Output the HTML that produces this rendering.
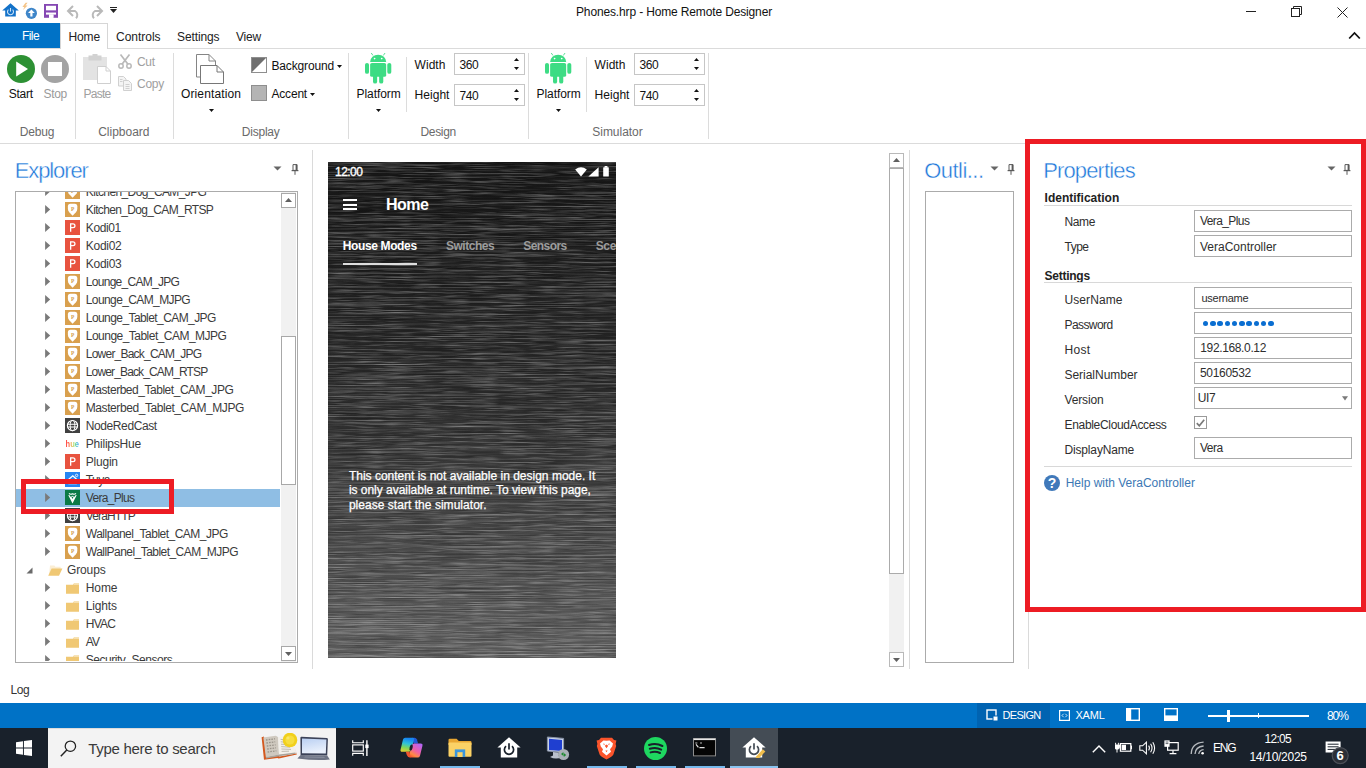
<!DOCTYPE html>
<html><head><meta charset="utf-8"><title>Home Remote Designer</title>
<style>
html,body{margin:0;padding:0;}
body{width:1366px;height:768px;overflow:hidden;background:#fff;position:relative;font-family:"Liberation Sans", sans-serif;}
.t{position:absolute;white-space:pre;}
.r{position:absolute;box-sizing:border-box;}
</style></head><body>
<svg class="r" style="left:1.5px;top:2.5px;" width="17" height="14" viewBox="0 0 17 14"><path d="M8.5 0.2 L16.8 7.4 H13.8 V13.6 H3.2 V7.4 H0.2 Z" fill="#1372c9"/><path d="M6.4 6.6 A3 3 0 1 0 10.6 6.6" fill="none" stroke="#cfe4f7" stroke-width="1.1"/><path d="M8.5 5 V8.6" stroke="#cfe4f7" stroke-width="1.1"/></svg>
<svg class="r" style="left:22px;top:2px;" width="17" height="17" viewBox="0 0 17 17"><path d="M3.6 0.8 L0.4 5 H2.4 L1 8 L5.6 3.6 H3.4 L5.6 0.8 Z" fill="#f5c487"/><circle cx="9.4" cy="11.3" r="5.6" fill="#3f86c9"/><path d="M9.4 7.6 L12.8 11 H10.5 V14.6 H8.3 V11 H6 Z" fill="#fff"/></svg>
<svg class="r" style="left:44px;top:4px;" width="14" height="14" viewBox="0 0 14 14"><rect x="0" y="0" width="14" height="13.8" fill="#8548b3"/><rect x="2" y="1.8" width="10" height="4.8" fill="#fff"/><rect x="2" y="8.6" width="10" height="5.2" fill="#fff"/><rect x="2" y="8.6" width="3" height="3" fill="#fff"/><path d="M2 8.6 H12 V13.8 H9.4 V10.6 H5 V13.8 H2 Z" fill="#8548b3"/><rect x="2" y="6.6" width="10" height="2" fill="#8548b3"/><rect x="5" y="10.6" width="4.4" height="3.2" fill="#fff"/><rect x="2" y="8.6" width="10" height="2" fill="#fff"/></svg>
<svg class="r" style="left:65.5px;top:4.5px;" width="16" height="14" viewBox="0 0 16 14"><path d="M7 1 L2 6 L7 11" fill="none" stroke="#b9b9b9" stroke-width="2"/><path d="M2.4 6 H9 A4.6 4.6 0 0 1 10 13.2" fill="none" stroke="#b9b9b9" stroke-width="2"/></svg>
<svg class="r" style="left:87.5px;top:4.5px;" width="16" height="14" viewBox="0 0 16 14"><path d="M9 1 L14 6 L9 11" fill="none" stroke="#b9b9b9" stroke-width="2"/><path d="M13.6 6 H7 A4.6 4.6 0 0 0 6 13.2" fill="none" stroke="#b9b9b9" stroke-width="2"/></svg>
<div class="r" style="left:109.5px;top:7px;width:7px;height:1px;background:#222;"></div>
<svg class="r" style="left:109.5px;top:9px;" width="7" height="5" viewBox="0 0 7 5"><path d="M0 0 H7 L3.5 4 Z" fill="#222"/></svg>
<div class="t" style="left:576.00px;top:4.04px;font-size:12px;line-height:16px;color:#111;letter-spacing:-0.144px;">Phones.hrp - Home Remote Designer</div>
<div class="r" style="left:1246px;top:11px;width:10px;height:1px;background:#222;"></div>
<svg class="r" style="left:1291px;top:6px;" width="12" height="12" viewBox="0 0 12 12"><path d="M2.5 2.5 V0.5 H10.5 V8.5 H8.5" fill="none" stroke="#222" stroke-width="1"/><rect x="0.5" y="2.5" width="8" height="8" fill="none" stroke="#222" stroke-width="1"/></svg>
<svg class="r" style="left:1337px;top:7px;" width="11" height="11" viewBox="0 0 11 11"><path d="M0.5 0.5 L10.5 10.5 M10.5 0.5 L0.5 10.5" stroke="#222" stroke-width="1" fill="none"/></svg>
<svg class="r" style="left:1348px;top:31px;" width="13" height="9" viewBox="0 0 13 9"><path d="M1.2 7.5 L6.5 2 L11.8 7.5" fill="none" stroke="#111" stroke-width="1.8"/></svg>
<div class="r" style="left:0px;top:23px;width:60px;height:25px;background:#0072c6;"></div>
<div class="t" style="left:22.00px;top:28.14px;font-size:12px;line-height:16px;color:#fff;letter-spacing:-0.586px;">File</div>
<div class="r" style="left:0px;top:48px;width:1366px;height:1px;background:#dbdbdb;"></div>
<div class="r" style="left:60px;top:23px;width:48px;height:26px;background:#fff;border:1px solid #d6d6d6;border-bottom:none;"></div>
<div class="t" style="left:68.50px;top:28.74px;font-size:12px;line-height:16px;color:#222;letter-spacing:-0.129px;">Home</div>
<div class="t" style="left:116.00px;top:28.74px;font-size:12px;line-height:16px;color:#222;letter-spacing:-0.023px;">Controls</div>
<div class="t" style="left:177.00px;top:28.74px;font-size:12px;line-height:16px;color:#222;letter-spacing:-0.107px;">Settings</div>
<div class="t" style="left:236.00px;top:28.74px;font-size:12px;line-height:16px;color:#222;letter-spacing:-0.199px;">View</div>
<div class="r" style="left:0px;top:143px;width:1366px;height:1px;background:#dbdbdb;"></div>
<div class="r" style="left:75px;top:53px;width:1px;height:86px;background:#dcdcdc;"></div>
<div class="r" style="left:173px;top:53px;width:1px;height:86px;background:#dcdcdc;"></div>
<div class="r" style="left:348px;top:53px;width:1px;height:86px;background:#dcdcdc;"></div>
<div class="r" style="left:528px;top:53px;width:1px;height:86px;background:#dcdcdc;"></div>
<div class="r" style="left:708px;top:53px;width:1px;height:86px;background:#dcdcdc;"></div>
<div class="r" style="left:406px;top:57px;width:1px;height:55px;background:#dcdcdc;"></div>
<div class="r" style="left:586px;top:57px;width:1px;height:55px;background:#dcdcdc;"></div>
<div class="t" style="left:19.80px;top:124.14px;font-size:12px;line-height:16px;color:#6a6a6a;letter-spacing:-0.175px;">Debug</div>
<div class="t" style="left:98.20px;top:124.14px;font-size:12px;line-height:16px;color:#6a6a6a;letter-spacing:-0.008px;">Clipboard</div>
<div class="t" style="left:241.80px;top:124.14px;font-size:12px;line-height:16px;color:#6a6a6a;letter-spacing:-0.223px;">Display</div>
<div class="t" style="left:420.40px;top:124.14px;font-size:12px;line-height:16px;color:#6a6a6a;letter-spacing:-0.293px;">Design</div>
<div class="t" style="left:592.30px;top:124.14px;font-size:12px;line-height:16px;color:#6a6a6a;letter-spacing:-0.032px;">Simulator</div>
<svg class="r" style="left:7px;top:55px;" width="28" height="28" viewBox="0 0 28 28"><circle cx="14" cy="14" r="14" fill="#2d9134"/><path d="M9.2 6.5 L21 14 L9.2 21.5 Z" fill="#fff"/></svg>
<svg class="r" style="left:41px;top:55px;" width="28" height="28" viewBox="0 0 28 28"><circle cx="14" cy="14" r="14" fill="#a3a3a3"/><rect x="7" y="7" width="14" height="14" fill="#fff"/></svg>
<div class="t" style="left:8.70px;top:85.64px;font-size:12px;line-height:16px;color:#111;letter-spacing:-0.209px;">Start</div>
<div class="t" style="left:43.50px;top:85.64px;font-size:12px;line-height:16px;color:#9a9a9a;letter-spacing:-0.297px;">Stop</div>
<svg class="r" style="left:83px;top:54px;" width="28" height="30" viewBox="0 0 28 30"><rect x="0" y="3" width="24" height="23" fill="#e3e3e3"/><rect x="5.5" y="1.5" width="13" height="5" fill="#d2d2d2"/><rect x="9.5" y="0" width="5" height="3" fill="#d2d2d2"/><path d="M14.5 12.5 H23 L27.5 17 V29.5 H14.5 Z" fill="#fff" stroke="#cfcfcf" stroke-width="1"/><path d="M23 12.5 V17 H27.5" fill="none" stroke="#cfcfcf" stroke-width="1"/></svg>
<div class="t" style="left:83.50px;top:85.64px;font-size:12px;line-height:16px;color:#a0a0a0;letter-spacing:-0.738px;">Paste</div>
<svg class="r" style="left:118px;top:54px;" width="14" height="15" viewBox="0 0 14 15"><path d="M2.5 0.5 L10.2 10.5 M11.5 0.5 L3.8 10.5" stroke="#b9b9b9" stroke-width="1.7" fill="none"/><circle cx="3" cy="12" r="2.2" fill="none" stroke="#b9b9b9" stroke-width="1.5"/><circle cx="11" cy="12" r="2.2" fill="none" stroke="#b9b9b9" stroke-width="1.5"/></svg>
<div class="t" style="left:137.00px;top:54.34px;font-size:12px;line-height:16px;color:#a0a0a0;letter-spacing:-0.296px;">Cut</div>
<svg class="r" style="left:118px;top:76px;" width="14" height="15" viewBox="0 0 14 15"><path d="M0.5 0.5 H5.5 L8 3 V10 H0.5 Z" fill="#f4f4f4" stroke="#d0d0d0"/><path d="M5.5 4.5 H10.5 L13.5 7.5 V14.5 H5.5 Z" fill="#f4f4f4" stroke="#d0d0d0"/><path d="M7.5 8.5 H11.5 M7.5 10.5 H11.5 M7.5 12.5 H11.5 M2 3.5 H4.5 M2 5.5 H4.5" stroke="#d0d0d0" fill="none"/></svg>
<div class="t" style="left:137.00px;top:76.44px;font-size:12px;line-height:16px;color:#a0a0a0;letter-spacing:-0.254px;">Copy</div>
<svg class="r" style="left:196px;top:54px;" width="29" height="31" viewBox="0 0 29 31"><path d="M4.5 23 H0.5 V0.5 H13 L19.5 7 V11" fill="none" stroke="#858585" stroke-width="1"/><path d="M13 0.5 V7 H19.5" fill="none" stroke="#858585" stroke-width="1"/><path d="M4.5 11.5 H21 L27.5 18 V29.5 H4.5 Z" fill="#fff" stroke="#777" stroke-width="1"/><path d="M21 11.5 V18 H27.5" fill="none" stroke="#777" stroke-width="1"/></svg>
<div class="t" style="left:181.00px;top:85.64px;font-size:12px;line-height:16px;color:#111;letter-spacing:0.118px;">Orientation</div>
<svg class="r" style="left:209px;top:109px;" width="5" height="3" viewBox="0 0 5 3"><path d="M0 0 H5 L2.5 3 Z" fill="#111"/></svg>
<svg class="r" style="left:251px;top:57px;" width="16" height="16" viewBox="0 0 16 16"><rect x="0.5" y="0.5" width="15" height="15" fill="#fff" stroke="#8e8e8e"/><path d="M1 1 H15 L1 15 Z" fill="#6f6f6f"/></svg>
<div class="t" style="left:271.50px;top:58.24px;font-size:12px;line-height:16px;color:#111;letter-spacing:-0.155px;">Background</div>
<svg class="r" style="left:337px;top:65px;" width="5" height="3" viewBox="0 0 5 3"><path d="M0 0 H5 L2.5 3 Z" fill="#111"/></svg>
<div class="r" style="left:251px;top:85px;width:16px;height:16px;background:#b4b4b4;border:1px solid #8e8e8e;"></div>
<div class="t" style="left:271.50px;top:86.44px;font-size:12px;line-height:16px;color:#111;letter-spacing:-0.198px;">Accent</div>
<svg class="r" style="left:310px;top:93px;" width="5" height="3" viewBox="0 0 5 3"><path d="M0 0 H5 L2.5 3 Z" fill="#111"/></svg>
<svg class="r" style="left:364.8px;top:53.3px;overflow:visible;" width="26.3" height="30.5" viewBox="1.4 0.4 23.6 29.6" preserveAspectRatio="none"><g fill="#3ddc84"><path d="M6 9.2 A7.2 7.2 0 0 1 20.4 9.2 Z"/><rect x="6" y="10.2" width="14.4" height="13.3" rx="1.6"/><rect x="1.4" y="10" width="3.6" height="10.6" rx="1.8"/><rect x="21.4" y="10" width="3.6" height="10.6" rx="1.8"/><rect x="8.6" y="20" width="3.7" height="10" rx="1.8"/><rect x="14.1" y="20" width="3.7" height="10" rx="1.8"/></g><path d="M8.6 2.8 L7 0.4 M17.8 2.8 L19.4 0.4" stroke="#3ddc84" stroke-width=".8"/><circle cx="10" cy="5.8" r=".8" fill="#fff"/><circle cx="16.4" cy="5.8" r=".8" fill="#fff"/></svg>
<div class="t" style="left:356.60px;top:85.64px;font-size:12px;line-height:16px;color:#111;letter-spacing:-0.086px;">Platform</div>
<svg class="r" style="left:376px;top:109px;" width="5" height="3" viewBox="0 0 5 3"><path d="M0 0 H5 L2.5 3 Z" fill="#111"/></svg>
<div class="t" style="left:414.60px;top:56.84px;font-size:12px;line-height:16px;color:#111;letter-spacing:0.023px;">Width</div>
<div class="t" style="left:414.60px;top:87.44px;font-size:12px;line-height:16px;color:#111;letter-spacing:0.035px;">Height</div>
<div class="r" style="left:454px;top:53px;width:71px;height:22px;background:#fff;border:1px solid #c6c6c6;"></div>
<div class="t" style="left:459.40px;top:56.84px;font-size:12px;line-height:16px;color:#111;letter-spacing:-0.344px;">360</div>
<svg class="r" style="left:514px;top:58px;" width="5" height="3" viewBox="0 0 5 3"><path d="M0 3 H5 L2.5 0 Z" fill="#111"/></svg>
<svg class="r" style="left:514px;top:67px;" width="5" height="3" viewBox="0 0 5 3"><path d="M0 0 H5 L2.5 3 Z" fill="#111"/></svg>
<div class="r" style="left:454px;top:84px;width:71px;height:22px;background:#fff;border:1px solid #c6c6c6;"></div>
<div class="t" style="left:459.40px;top:87.84px;font-size:12px;line-height:16px;color:#111;letter-spacing:-0.344px;">740</div>
<svg class="r" style="left:514px;top:89px;" width="5" height="3" viewBox="0 0 5 3"><path d="M0 3 H5 L2.5 0 Z" fill="#111"/></svg>
<svg class="r" style="left:514px;top:98px;" width="5" height="3" viewBox="0 0 5 3"><path d="M0 0 H5 L2.5 3 Z" fill="#111"/></svg>
<svg class="r" style="left:544.8px;top:53.3px;overflow:visible;" width="26.3" height="30.5" viewBox="1.4 0.4 23.6 29.6" preserveAspectRatio="none"><g fill="#3ddc84"><path d="M6 9.2 A7.2 7.2 0 0 1 20.4 9.2 Z"/><rect x="6" y="10.2" width="14.4" height="13.3" rx="1.6"/><rect x="1.4" y="10" width="3.6" height="10.6" rx="1.8"/><rect x="21.4" y="10" width="3.6" height="10.6" rx="1.8"/><rect x="8.6" y="20" width="3.7" height="10" rx="1.8"/><rect x="14.1" y="20" width="3.7" height="10" rx="1.8"/></g><path d="M8.6 2.8 L7 0.4 M17.8 2.8 L19.4 0.4" stroke="#3ddc84" stroke-width=".8"/><circle cx="10" cy="5.8" r=".8" fill="#fff"/><circle cx="16.4" cy="5.8" r=".8" fill="#fff"/></svg>
<div class="t" style="left:536.60px;top:85.64px;font-size:12px;line-height:16px;color:#111;letter-spacing:-0.086px;">Platform</div>
<svg class="r" style="left:556px;top:109px;" width="5" height="3" viewBox="0 0 5 3"><path d="M0 0 H5 L2.5 3 Z" fill="#111"/></svg>
<div class="t" style="left:594.60px;top:56.84px;font-size:12px;line-height:16px;color:#111;letter-spacing:0.023px;">Width</div>
<div class="t" style="left:594.60px;top:87.44px;font-size:12px;line-height:16px;color:#111;letter-spacing:0.035px;">Height</div>
<div class="r" style="left:634px;top:53px;width:71px;height:22px;background:#fff;border:1px solid #c6c6c6;"></div>
<div class="t" style="left:639.40px;top:56.84px;font-size:12px;line-height:16px;color:#111;letter-spacing:-0.344px;">360</div>
<svg class="r" style="left:694px;top:58px;" width="5" height="3" viewBox="0 0 5 3"><path d="M0 3 H5 L2.5 0 Z" fill="#111"/></svg>
<svg class="r" style="left:694px;top:67px;" width="5" height="3" viewBox="0 0 5 3"><path d="M0 0 H5 L2.5 3 Z" fill="#111"/></svg>
<div class="r" style="left:634px;top:84px;width:71px;height:22px;background:#fff;border:1px solid #c6c6c6;"></div>
<div class="t" style="left:639.40px;top:87.84px;font-size:12px;line-height:16px;color:#111;letter-spacing:-0.344px;">740</div>
<svg class="r" style="left:694px;top:89px;" width="5" height="3" viewBox="0 0 5 3"><path d="M0 3 H5 L2.5 0 Z" fill="#111"/></svg>
<svg class="r" style="left:694px;top:98px;" width="5" height="3" viewBox="0 0 5 3"><path d="M0 0 H5 L2.5 3 Z" fill="#111"/></svg>
<div class="t" style="left:14.70px;top:158.08px;font-size:22px;line-height:26px;color:#1d78da;letter-spacing:-1.103px;-webkit-text-stroke:0.4px #fff;">Explorer</div>
<svg class="r" style="left:273.4px;top:166px;" width="9" height="5" viewBox="0 0 9 5"><path d="M0.5 0.5 H8.5 L4.5 4.5 Z" fill="#666"/></svg>
<svg class="r" style="left:290.8px;top:164px;" width="8" height="11" viewBox="0 0 8 11"><path d="M2 0.6 H6 V6.4 H2 Z" fill="none" stroke="#5a5a5a" stroke-width="1"/><rect x="4.6" y="0.6" width="1.6" height="6" fill="#5a5a5a"/><rect x="0.6" y="6" width="6.8" height="1.2" fill="#5a5a5a"/><rect x="3.5" y="7" width="1" height="3.8" fill="#5a5a5a"/></svg>
<div class="r" style="left:15px;top:191px;width:283px;height:472px;background:#fff;border:1px solid #ababab;"></div>
<div class="r" style="left:16px;top:192px;width:265px;height:469px;overflow:hidden;">
<svg class="r" style="left:29px;top:-5.0px;" width="6" height="9" viewBox="0 0 6 9"><path d="M0.1 0.1 L5.2 4.5 L0.1 8.9 Z" fill="#7a7a7a"/></svg>
<svg class="r" style="left:49px;top:-7.75px;" width="15" height="15" viewBox="0 0 15 15"><rect width="15" height="15" fill="#d9a04e"/><path d="M5.4 1.7 H9.8 Q12.3 1.7 12.3 4.2 V6.8 Q12.3 8.8 10.9 10.3 L7.6 13.8 L4.3 10.3 Q2.9 8.8 2.9 6.8 V4.2 Q2.9 1.7 5.4 1.7 Z" fill="#fff"/><text x="6.1" y="8.6" font-family="Liberation Serif" font-weight="700" font-size="5.4" fill="#d39a48">P</text></svg>
<div class="t" style="left:69.80px;top:-8.26px;font-size:12px;line-height:16px;color:#3b3b3b;letter-spacing:-0.609px;">Kitchen_Dog_CAM_JPG</div>
<svg class="r" style="left:29px;top:13.0px;" width="6" height="9" viewBox="0 0 6 9"><path d="M0.1 0.1 L5.2 4.5 L0.1 8.9 Z" fill="#7a7a7a"/></svg>
<svg class="r" style="left:49px;top:10.25px;" width="15" height="15" viewBox="0 0 15 15"><rect width="15" height="15" fill="#d9a04e"/><path d="M5.4 1.7 H9.8 Q12.3 1.7 12.3 4.2 V6.8 Q12.3 8.8 10.9 10.3 L7.6 13.8 L4.3 10.3 Q2.9 8.8 2.9 6.8 V4.2 Q2.9 1.7 5.4 1.7 Z" fill="#fff"/><text x="6.1" y="8.6" font-family="Liberation Serif" font-weight="700" font-size="5.4" fill="#d39a48">P</text></svg>
<div class="t" style="left:69.80px;top:9.74px;font-size:12px;line-height:16px;color:#3b3b3b;letter-spacing:-0.656px;">Kitchen_Dog_CAM_RTSP</div>
<svg class="r" style="left:29px;top:31.0px;" width="6" height="9" viewBox="0 0 6 9"><path d="M0.1 0.1 L5.2 4.5 L0.1 8.9 Z" fill="#7a7a7a"/></svg>
<svg class="r" style="left:49px;top:28.25px;" width="15" height="15" viewBox="0 0 15 15"><rect width="15" height="15" fill="#e8533f"/><path d="M5 3.2 H8 Q10.6 3.2 10.6 5.7 Q10.6 8.2 8 8.2 H6.3 V11.8 H5 Z M6.3 4.4 V7 H7.9 Q9.3 7 9.3 5.7 Q9.3 4.4 7.9 4.4 Z" fill="#fff" fill-rule="evenodd"/></svg>
<div class="t" style="left:69.80px;top:27.74px;font-size:12px;line-height:16px;color:#3b3b3b;letter-spacing:-0.396px;">Kodi01</div>
<svg class="r" style="left:29px;top:49.0px;" width="6" height="9" viewBox="0 0 6 9"><path d="M0.1 0.1 L5.2 4.5 L0.1 8.9 Z" fill="#7a7a7a"/></svg>
<svg class="r" style="left:49px;top:46.25px;" width="15" height="15" viewBox="0 0 15 15"><rect width="15" height="15" fill="#e8533f"/><path d="M5 3.2 H8 Q10.6 3.2 10.6 5.7 Q10.6 8.2 8 8.2 H6.3 V11.8 H5 Z M6.3 4.4 V7 H7.9 Q9.3 7 9.3 5.7 Q9.3 4.4 7.9 4.4 Z" fill="#fff" fill-rule="evenodd"/></svg>
<div class="t" style="left:69.80px;top:45.74px;font-size:12px;line-height:16px;color:#3b3b3b;letter-spacing:-0.296px;">Kodi02</div>
<svg class="r" style="left:29px;top:67.0px;" width="6" height="9" viewBox="0 0 6 9"><path d="M0.1 0.1 L5.2 4.5 L0.1 8.9 Z" fill="#7a7a7a"/></svg>
<svg class="r" style="left:49px;top:64.25px;" width="15" height="15" viewBox="0 0 15 15"><rect width="15" height="15" fill="#e8533f"/><path d="M5 3.2 H8 Q10.6 3.2 10.6 5.7 Q10.6 8.2 8 8.2 H6.3 V11.8 H5 Z M6.3 4.4 V7 H7.9 Q9.3 7 9.3 5.7 Q9.3 4.4 7.9 4.4 Z" fill="#fff" fill-rule="evenodd"/></svg>
<div class="t" style="left:69.80px;top:63.74px;font-size:12px;line-height:16px;color:#3b3b3b;letter-spacing:-0.296px;">Kodi03</div>
<svg class="r" style="left:29px;top:85.0px;" width="6" height="9" viewBox="0 0 6 9"><path d="M0.1 0.1 L5.2 4.5 L0.1 8.9 Z" fill="#7a7a7a"/></svg>
<svg class="r" style="left:49px;top:82.25px;" width="15" height="15" viewBox="0 0 15 15"><rect width="15" height="15" fill="#d9a04e"/><path d="M5.4 1.7 H9.8 Q12.3 1.7 12.3 4.2 V6.8 Q12.3 8.8 10.9 10.3 L7.6 13.8 L4.3 10.3 Q2.9 8.8 2.9 6.8 V4.2 Q2.9 1.7 5.4 1.7 Z" fill="#fff"/><text x="6.1" y="8.6" font-family="Liberation Serif" font-weight="700" font-size="5.4" fill="#d39a48">P</text></svg>
<div class="t" style="left:69.80px;top:81.74px;font-size:12px;line-height:16px;color:#3b3b3b;letter-spacing:-0.715px;">Lounge_CAM_JPG</div>
<svg class="r" style="left:29px;top:103.0px;" width="6" height="9" viewBox="0 0 6 9"><path d="M0.1 0.1 L5.2 4.5 L0.1 8.9 Z" fill="#7a7a7a"/></svg>
<svg class="r" style="left:49px;top:100.25px;" width="15" height="15" viewBox="0 0 15 15"><rect width="15" height="15" fill="#d9a04e"/><path d="M5.4 1.7 H9.8 Q12.3 1.7 12.3 4.2 V6.8 Q12.3 8.8 10.9 10.3 L7.6 13.8 L4.3 10.3 Q2.9 8.8 2.9 6.8 V4.2 Q2.9 1.7 5.4 1.7 Z" fill="#fff"/><text x="6.1" y="8.6" font-family="Liberation Serif" font-weight="700" font-size="5.4" fill="#d39a48">P</text></svg>
<div class="t" style="left:69.80px;top:99.74px;font-size:12px;line-height:16px;color:#3b3b3b;letter-spacing:-0.606px;">Lounge_CAM_MJPG</div>
<svg class="r" style="left:29px;top:121.0px;" width="6" height="9" viewBox="0 0 6 9"><path d="M0.1 0.1 L5.2 4.5 L0.1 8.9 Z" fill="#7a7a7a"/></svg>
<svg class="r" style="left:49px;top:118.25px;" width="15" height="15" viewBox="0 0 15 15"><rect width="15" height="15" fill="#d9a04e"/><path d="M5.4 1.7 H9.8 Q12.3 1.7 12.3 4.2 V6.8 Q12.3 8.8 10.9 10.3 L7.6 13.8 L4.3 10.3 Q2.9 8.8 2.9 6.8 V4.2 Q2.9 1.7 5.4 1.7 Z" fill="#fff"/><text x="6.1" y="8.6" font-family="Liberation Serif" font-weight="700" font-size="5.4" fill="#d39a48">P</text></svg>
<div class="t" style="left:69.80px;top:117.74px;font-size:12px;line-height:16px;color:#3b3b3b;letter-spacing:-0.576px;">Lounge_Tablet_CAM_JPG</div>
<svg class="r" style="left:29px;top:139.0px;" width="6" height="9" viewBox="0 0 6 9"><path d="M0.1 0.1 L5.2 4.5 L0.1 8.9 Z" fill="#7a7a7a"/></svg>
<svg class="r" style="left:49px;top:136.25px;" width="15" height="15" viewBox="0 0 15 15"><rect width="15" height="15" fill="#d9a04e"/><path d="M5.4 1.7 H9.8 Q12.3 1.7 12.3 4.2 V6.8 Q12.3 8.8 10.9 10.3 L7.6 13.8 L4.3 10.3 Q2.9 8.8 2.9 6.8 V4.2 Q2.9 1.7 5.4 1.7 Z" fill="#fff"/><text x="6.1" y="8.6" font-family="Liberation Serif" font-weight="700" font-size="5.4" fill="#d39a48">P</text></svg>
<div class="t" style="left:69.80px;top:135.74px;font-size:12px;line-height:16px;color:#3b3b3b;letter-spacing:-0.527px;">Lounge_Tablet_CAM_MJPG</div>
<svg class="r" style="left:29px;top:157.0px;" width="6" height="9" viewBox="0 0 6 9"><path d="M0.1 0.1 L5.2 4.5 L0.1 8.9 Z" fill="#7a7a7a"/></svg>
<svg class="r" style="left:49px;top:154.25px;" width="15" height="15" viewBox="0 0 15 15"><rect width="15" height="15" fill="#d9a04e"/><path d="M5.4 1.7 H9.8 Q12.3 1.7 12.3 4.2 V6.8 Q12.3 8.8 10.9 10.3 L7.6 13.8 L4.3 10.3 Q2.9 8.8 2.9 6.8 V4.2 Q2.9 1.7 5.4 1.7 Z" fill="#fff"/><text x="6.1" y="8.6" font-family="Liberation Serif" font-weight="700" font-size="5.4" fill="#d39a48">P</text></svg>
<div class="t" style="left:69.80px;top:153.74px;font-size:12px;line-height:16px;color:#3b3b3b;letter-spacing:-0.777px;">Lower_Back_CAM_JPG</div>
<svg class="r" style="left:29px;top:175.0px;" width="6" height="9" viewBox="0 0 6 9"><path d="M0.1 0.1 L5.2 4.5 L0.1 8.9 Z" fill="#7a7a7a"/></svg>
<svg class="r" style="left:49px;top:172.25px;" width="15" height="15" viewBox="0 0 15 15"><rect width="15" height="15" fill="#d9a04e"/><path d="M5.4 1.7 H9.8 Q12.3 1.7 12.3 4.2 V6.8 Q12.3 8.8 10.9 10.3 L7.6 13.8 L4.3 10.3 Q2.9 8.8 2.9 6.8 V4.2 Q2.9 1.7 5.4 1.7 Z" fill="#fff"/><text x="6.1" y="8.6" font-family="Liberation Serif" font-weight="700" font-size="5.4" fill="#d39a48">P</text></svg>
<div class="t" style="left:69.80px;top:171.74px;font-size:12px;line-height:16px;color:#3b3b3b;letter-spacing:-0.860px;">Lower_Back_CAM_RTSP</div>
<svg class="r" style="left:29px;top:193.0px;" width="6" height="9" viewBox="0 0 6 9"><path d="M0.1 0.1 L5.2 4.5 L0.1 8.9 Z" fill="#7a7a7a"/></svg>
<svg class="r" style="left:49px;top:190.25px;" width="15" height="15" viewBox="0 0 15 15"><rect width="15" height="15" fill="#d9a04e"/><path d="M5.4 1.7 H9.8 Q12.3 1.7 12.3 4.2 V6.8 Q12.3 8.8 10.9 10.3 L7.6 13.8 L4.3 10.3 Q2.9 8.8 2.9 6.8 V4.2 Q2.9 1.7 5.4 1.7 Z" fill="#fff"/><text x="6.1" y="8.6" font-family="Liberation Serif" font-weight="700" font-size="5.4" fill="#d39a48">P</text></svg>
<div class="t" style="left:69.80px;top:189.74px;font-size:12px;line-height:16px;color:#3b3b3b;letter-spacing:-0.469px;">Masterbed_Tablet_CAM_JPG</div>
<svg class="r" style="left:29px;top:211.0px;" width="6" height="9" viewBox="0 0 6 9"><path d="M0.1 0.1 L5.2 4.5 L0.1 8.9 Z" fill="#7a7a7a"/></svg>
<svg class="r" style="left:49px;top:208.25px;" width="15" height="15" viewBox="0 0 15 15"><rect width="15" height="15" fill="#d9a04e"/><path d="M5.4 1.7 H9.8 Q12.3 1.7 12.3 4.2 V6.8 Q12.3 8.8 10.9 10.3 L7.6 13.8 L4.3 10.3 Q2.9 8.8 2.9 6.8 V4.2 Q2.9 1.7 5.4 1.7 Z" fill="#fff"/><text x="6.1" y="8.6" font-family="Liberation Serif" font-weight="700" font-size="5.4" fill="#d39a48">P</text></svg>
<div class="t" style="left:69.80px;top:207.74px;font-size:12px;line-height:16px;color:#3b3b3b;letter-spacing:-0.426px;">Masterbed_Tablet_CAM_MJPG</div>
<svg class="r" style="left:29px;top:229.0px;" width="6" height="9" viewBox="0 0 6 9"><path d="M0.1 0.1 L5.2 4.5 L0.1 8.9 Z" fill="#7a7a7a"/></svg>
<svg class="r" style="left:49px;top:226.25px;" width="15" height="15" viewBox="0 0 15 15"><rect width="15" height="15" fill="#404040"/><g fill="none" stroke="#fff"><circle cx="7.5" cy="7.6" r="5.1" stroke-width="1.15"/><ellipse cx="7.5" cy="7.6" rx="2.3" ry="5.1" stroke-width="1"/><path d="M2.4 6.2 H12.6 M2.4 9 H12.6" stroke-width="1.1"/></g></svg>
<div class="t" style="left:69.80px;top:225.74px;font-size:12px;line-height:16px;color:#3b3b3b;letter-spacing:-0.407px;">NodeRedCast</div>
<svg class="r" style="left:29px;top:247.0px;" width="6" height="9" viewBox="0 0 6 9"><path d="M0.1 0.1 L5.2 4.5 L0.1 8.9 Z" fill="#7a7a7a"/></svg>
<svg class="r" style="left:49px;top:244.25px;" width="15" height="15" viewBox="0 0 15 15"><defs><linearGradient id="hg" gradientUnits="userSpaceOnUse" x1="0.5" x2="14" y1="0" y2="0"><stop offset="0" stop-color="#ff2020"/><stop offset=".22" stop-color="#ff3a24"/><stop offset=".4" stop-color="#f59a36"/><stop offset=".58" stop-color="#b4d24e"/><stop offset=".74" stop-color="#4ccf7e"/><stop offset=".9" stop-color="#2aa6ee"/><stop offset="1" stop-color="#2a9df4"/></linearGradient></defs><text x="0.6" y="11.2" font-family="Liberation Sans" font-size="8.2" font-weight="700" textLength="13.4" lengthAdjust="spacingAndGlyphs" fill="url(#hg)" opacity=".82">hue</text></svg>
<div class="t" style="left:69.80px;top:243.74px;font-size:12px;line-height:16px;color:#3b3b3b;letter-spacing:-0.227px;">PhilipsHue</div>
<svg class="r" style="left:29px;top:265.0px;" width="6" height="9" viewBox="0 0 6 9"><path d="M0.1 0.1 L5.2 4.5 L0.1 8.9 Z" fill="#7a7a7a"/></svg>
<svg class="r" style="left:49px;top:262.25px;" width="15" height="15" viewBox="0 0 15 15"><rect width="15" height="15" fill="#e8533f"/><path d="M5 3.2 H8 Q10.6 3.2 10.6 5.7 Q10.6 8.2 8 8.2 H6.3 V11.8 H5 Z M6.3 4.4 V7 H7.9 Q9.3 7 9.3 5.7 Q9.3 4.4 7.9 4.4 Z" fill="#fff" fill-rule="evenodd"/></svg>
<div class="t" style="left:69.80px;top:261.74px;font-size:12px;line-height:16px;color:#3b3b3b;letter-spacing:-0.227px;">Plugin</div>
<svg class="r" style="left:29px;top:283.0px;" width="6" height="9" viewBox="0 0 6 9"><path d="M0.1 0.1 L5.2 4.5 L0.1 8.9 Z" fill="#7a7a7a"/></svg>
<svg class="r" style="left:49px;top:280.25px;" width="15" height="15" viewBox="0 0 15 15"><rect width="15" height="15" fill="#2685f2"/><path d="M2.6 8.2 L7.8 3.8 L12.6 8.2 M4 7.6 V11.6 H11.2 V7.6" fill="none" stroke="#fff" stroke-width="1.3"/><circle cx="11.6" cy="3.4" r="1.2" fill="none" stroke="#fff" stroke-width=".8"/></svg>
<div class="t" style="left:69.80px;top:279.74px;font-size:12px;line-height:16px;color:#3b3b3b;letter-spacing:-0.559px;">Tuya</div>
<div class="r" style="left:0px;top:297.0px;width:264px;height:18px;background:#8fbee4;"></div>
<svg class="r" style="left:29px;top:301.0px;" width="6" height="9" viewBox="0 0 6 9"><path d="M0.1 0.1 L5.2 4.5 L0.1 8.9 Z" fill="#7a7a7a"/></svg>
<svg class="r" style="left:49px;top:298.25px;" width="15" height="15" viewBox="0 0 15 15"><rect width="15" height="15" fill="#0b7a46"/><path d="M3.8 5 L7.5 12.4 L11.2 5 M5.7 6.6 L7.5 10.2 L9.3 6.6 M4 3.4 Q5.6 5 7.5 3.8 Q9.4 5 11 3.4" fill="none" stroke="#fff" stroke-width="1.05"/><path d="M6.6 6.4 H8.4" stroke="#fff" stroke-width=".9"/></svg>
<div class="t" style="left:69.80px;top:297.74px;font-size:12px;line-height:16px;color:#3b3b3b;letter-spacing:-0.678px;">Vera_Plus</div>
<svg class="r" style="left:29px;top:319.0px;" width="6" height="9" viewBox="0 0 6 9"><path d="M0.1 0.1 L5.2 4.5 L0.1 8.9 Z" fill="#7a7a7a"/></svg>
<svg class="r" style="left:49px;top:316.25px;" width="15" height="15" viewBox="0 0 15 15"><rect width="15" height="15" fill="#404040"/><g fill="none" stroke="#fff"><circle cx="7.5" cy="7.6" r="5.1" stroke-width="1.15"/><ellipse cx="7.5" cy="7.6" rx="2.3" ry="5.1" stroke-width="1"/><path d="M2.4 6.2 H12.6 M2.4 9 H12.6" stroke-width="1.1"/></g></svg>
<div class="t" style="left:69.80px;top:315.74px;font-size:12px;line-height:16px;color:#3b3b3b;letter-spacing:-0.877px;">VeraHTTP</div>
<svg class="r" style="left:29px;top:337.0px;" width="6" height="9" viewBox="0 0 6 9"><path d="M0.1 0.1 L5.2 4.5 L0.1 8.9 Z" fill="#7a7a7a"/></svg>
<svg class="r" style="left:49px;top:334.25px;" width="15" height="15" viewBox="0 0 15 15"><rect width="15" height="15" fill="#d9a04e"/><path d="M5.4 1.7 H9.8 Q12.3 1.7 12.3 4.2 V6.8 Q12.3 8.8 10.9 10.3 L7.6 13.8 L4.3 10.3 Q2.9 8.8 2.9 6.8 V4.2 Q2.9 1.7 5.4 1.7 Z" fill="#fff"/><text x="6.1" y="8.6" font-family="Liberation Serif" font-weight="700" font-size="5.4" fill="#d39a48">P</text></svg>
<div class="t" style="left:69.80px;top:333.74px;font-size:12px;line-height:16px;color:#3b3b3b;letter-spacing:-0.512px;">Wallpanel_Tablet_CAM_JPG</div>
<svg class="r" style="left:29px;top:355.0px;" width="6" height="9" viewBox="0 0 6 9"><path d="M0.1 0.1 L5.2 4.5 L0.1 8.9 Z" fill="#7a7a7a"/></svg>
<svg class="r" style="left:49px;top:352.25px;" width="15" height="15" viewBox="0 0 15 15"><rect width="15" height="15" fill="#d9a04e"/><path d="M5.4 1.7 H9.8 Q12.3 1.7 12.3 4.2 V6.8 Q12.3 8.8 10.9 10.3 L7.6 13.8 L4.3 10.3 Q2.9 8.8 2.9 6.8 V4.2 Q2.9 1.7 5.4 1.7 Z" fill="#fff"/><text x="6.1" y="8.6" font-family="Liberation Serif" font-weight="700" font-size="5.4" fill="#d39a48">P</text></svg>
<div class="t" style="left:69.80px;top:351.74px;font-size:12px;line-height:16px;color:#3b3b3b;letter-spacing:-0.537px;">WallPanel_Tablet_CAM_MJPG</div>
<svg class="r" style="left:9.5px;top:374.5px;" width="7" height="7" viewBox="0 0 7 7"><path d="M6.5 0.5 V6.5 H0.5 Z" fill="#6a6a6a"/></svg>
<svg class="r" style="left:32px;top:373.0px;" width="15" height="11" viewBox="0 0 15 11"><path d="M2 0.4 H6.4 L7.4 1.8 H12.6 V4 H4 L1 10.6 Z" fill="#fbeed4"/><path d="M0.2 10.8 L3.6 3.6 H14.4 L11 10.8 Z" fill="#f0c874"/></svg>
<div class="t" style="left:51.10px;top:369.74px;font-size:12px;line-height:16px;color:#3b3b3b;letter-spacing:-0.160px;">Groups</div>
<svg class="r" style="left:29px;top:391.0px;" width="6" height="9" viewBox="0 0 6 9"><path d="M0.1 0.1 L5.2 4.5 L0.1 8.9 Z" fill="#7a7a7a"/></svg>
<svg class="r" style="left:50px;top:391.0px;" width="13" height="11" viewBox="0 0 13 11"><path d="M0 1.8 H7 L8 0.2 H13 V10.8 H0 Z" fill="#f0c874"/><path d="M7.4 1.7 L8.3 0.2 H13 V1.7 Z" fill="#f9e7c0"/></svg>
<div class="t" style="left:69.80px;top:387.74px;font-size:12px;line-height:16px;color:#3b3b3b;letter-spacing:-0.129px;">Home</div>
<svg class="r" style="left:29px;top:409.0px;" width="6" height="9" viewBox="0 0 6 9"><path d="M0.1 0.1 L5.2 4.5 L0.1 8.9 Z" fill="#7a7a7a"/></svg>
<svg class="r" style="left:50px;top:409.0px;" width="13" height="11" viewBox="0 0 13 11"><path d="M0 1.8 H7 L8 0.2 H13 V10.8 H0 Z" fill="#f0c874"/><path d="M7.4 1.7 L8.3 0.2 H13 V1.7 Z" fill="#f9e7c0"/></svg>
<div class="t" style="left:69.80px;top:405.74px;font-size:12px;line-height:16px;color:#3b3b3b;letter-spacing:-0.172px;">Lights</div>
<svg class="r" style="left:29px;top:427.0px;" width="6" height="9" viewBox="0 0 6 9"><path d="M0.1 0.1 L5.2 4.5 L0.1 8.9 Z" fill="#7a7a7a"/></svg>
<svg class="r" style="left:50px;top:427.0px;" width="13" height="11" viewBox="0 0 13 11"><path d="M0 1.8 H7 L8 0.2 H13 V10.8 H0 Z" fill="#f0c874"/><path d="M7.4 1.7 L8.3 0.2 H13 V1.7 Z" fill="#f9e7c0"/></svg>
<div class="t" style="left:69.80px;top:423.74px;font-size:12px;line-height:16px;color:#3b3b3b;letter-spacing:-0.738px;">HVAC</div>
<svg class="r" style="left:29px;top:445.0px;" width="6" height="9" viewBox="0 0 6 9"><path d="M0.1 0.1 L5.2 4.5 L0.1 8.9 Z" fill="#7a7a7a"/></svg>
<svg class="r" style="left:50px;top:445.0px;" width="13" height="11" viewBox="0 0 13 11"><path d="M0 1.8 H7 L8 0.2 H13 V10.8 H0 Z" fill="#f0c874"/><path d="M7.4 1.7 L8.3 0.2 H13 V1.7 Z" fill="#f9e7c0"/></svg>
<div class="t" style="left:69.80px;top:441.74px;font-size:12px;line-height:16px;color:#3b3b3b;letter-spacing:-0.812px;">AV</div>
<svg class="r" style="left:29px;top:463.0px;" width="6" height="9" viewBox="0 0 6 9"><path d="M0.1 0.1 L5.2 4.5 L0.1 8.9 Z" fill="#7a7a7a"/></svg>
<svg class="r" style="left:50px;top:463.0px;" width="13" height="11" viewBox="0 0 13 11"><path d="M0 1.8 H7 L8 0.2 H13 V10.8 H0 Z" fill="#f0c874"/><path d="M7.4 1.7 L8.3 0.2 H13 V1.7 Z" fill="#f9e7c0"/></svg>
<div class="t" style="left:69.80px;top:459.74px;font-size:12px;line-height:16px;color:#3b3b3b;letter-spacing:-0.472px;">Security_Sensors</div>
</div>
<div class="r" style="left:281px;top:192px;width:15px;height:470px;background:#f1f1f1;"></div>
<div class="r" style="left:281px;top:193px;width:15px;height:15px;background:#fff;border:1px solid #a8a8a8;"></div>
<svg class="r" style="left:284.8px;top:198px;" width="7" height="4" viewBox="0 0 7 4"><path d="M0 4 H7 L3.5 0 Z" fill="#606060"/></svg>
<div class="r" style="left:281px;top:646px;width:15px;height:15px;background:#fff;border:1px solid #a8a8a8;"></div>
<svg class="r" style="left:284.8px;top:652px;" width="7" height="4" viewBox="0 0 7 4"><path d="M0 0 H7 L3.5 4 Z" fill="#606060"/></svg>
<div class="r" style="left:281px;top:336px;width:15px;height:149px;background:#fff;border:1px solid #a8a8a8;"></div>
<div class="r" style="left:312px;top:150px;width:1px;height:519px;background:#dadada;"></div>
<div class="r" style="left:328px;top:162px;width:288px;height:496px;overflow:hidden;background:linear-gradient(180deg,#161616 0%,#1b1b1b 14%,#222222 28%,#292929 42%,#323232 55%,#3f3f3f 68%,#4d4d4d 82%,#595959 94%,#5d5d5d 100%);">
<svg class="r" style="left:0;top:0" width="288" height="496"><defs><filter id="br" x="0" y="0" width="100%" height="100%"><feTurbulence type="fractalNoise" baseFrequency="0.009 1.1" numOctaves="3" seed="7" result="n"/><feColorMatrix in="n" type="matrix" values="0 0 0 0 1  0 0 0 0 1  0 0 0 0 1  2.7 0 0 0 -1.28"/></filter><filter id="bg" x="0" y="0" width="100%" height="100%"><feTurbulence type="fractalNoise" baseFrequency="0.035 1.5" numOctaves="2" seed="41" result="n"/><feColorMatrix in="n" type="matrix" values="0 0 0 0 1  0 0 0 0 1  0 0 0 0 1  3.2 0 0 0 -1.55"/></filter><filter id="bd" x="0" y="0" width="100%" height="100%"><feTurbulence type="fractalNoise" baseFrequency="0.012 0.8" numOctaves="3" seed="23" result="n"/><feColorMatrix in="n" type="matrix" values="0 0 0 0 0  0 0 0 0 0  0 0 0 0 0  2.0 0 0 0 -0.85"/></filter></defs><rect width="288" height="496" filter="url(#bd)" opacity="0.30"/><rect width="288" height="496" filter="url(#br)" opacity="0.26"/><rect width="288" height="496" filter="url(#bg)" opacity="0.20"/></svg>
<div class="t" style="left:7.00px;top:2.14px;font-size:12px;line-height:16px;color:#fff;letter-spacing:-0.526px;-webkit-text-stroke:0.35px #fff;">12:00</div>
<svg class="r" style="left:247px;top:5px;" width="12" height="10" viewBox="0 0 12 10"><path d="M6 9.6 L0.2 2.4 Q6 -2 11.8 2.4 Z" fill="#fff"/></svg>
<svg class="r" style="left:259.5px;top:5px;" width="11" height="10" viewBox="0 0 11 10"><path d="M10.6 0.2 V9.6 H0.4 Z" fill="#fff"/></svg>
<svg class="r" style="left:275px;top:4px;" width="6" height="11" viewBox="0 0 6 11"><rect x="1.6" y="0" width="2.8" height="1.6" fill="#fff"/><rect x="0.2" y="1.2" width="5.6" height="9.4" rx="0.6" fill="#fff"/></svg>
<div class="r" style="left:15.399999999999977px;top:37.19999999999999px;width:14px;height:2px;background:#fff;"></div>
<div class="r" style="left:15.399999999999977px;top:41.599999999999994px;width:14px;height:2px;background:#fff;"></div>
<div class="r" style="left:15.399999999999977px;top:46px;width:14px;height:2px;background:#fff;"></div>
<div class="t" style="left:58.00px;top:32.76px;font-size:16px;line-height:19px;color:#fff;font-weight:700;letter-spacing:-0.488px;">Home</div>
<div class="t" style="left:14.70px;top:76.24px;font-size:12px;line-height:16px;color:#fff;font-weight:700;letter-spacing:-0.365px;">House Modes</div>
<div class="t" style="left:117.90px;top:76.24px;font-size:12px;line-height:16px;color:#9c9c9c;font-weight:700;letter-spacing:-0.466px;">Switches</div>
<div class="t" style="left:195.20px;top:76.24px;font-size:12px;line-height:16px;color:#9c9c9c;font-weight:700;letter-spacing:-0.551px;">Sensors</div>
<div class="t" style="left:267.70px;top:76.24px;font-size:12px;line-height:16px;color:#9c9c9c;font-weight:700;letter-spacing:-0.339px;">Scenes</div>
<div class="r" style="left:14.699999999999989px;top:101px;width:74px;height:1.6px;background:#dedede;"></div>
<div class="t" style="left:20.90px;top:306.04px;font-size:12px;line-height:16px;color:#ffffff;letter-spacing:0.005px;-webkit-text-stroke:0.25px #fff;">This content is not available in design mode. It</div>
<div class="t" style="left:20.90px;top:320.34px;font-size:12px;line-height:16px;color:#ffffff;letter-spacing:-0.026px;-webkit-text-stroke:0.25px #fff;">is only available at runtime. To view this page,</div>
<div class="t" style="left:20.90px;top:334.64px;font-size:12px;line-height:16px;color:#ffffff;letter-spacing:0.036px;-webkit-text-stroke:0.25px #fff;">please start the simulator.</div>
</div>
<div class="r" style="left:889px;top:153px;width:15px;height:514px;background:#f1f1f1;"></div>
<div class="r" style="left:889px;top:153px;width:15px;height:15px;background:#fff;border:1px solid #b9b9b9;"></div>
<svg class="r" style="left:893px;top:158px;" width="7" height="4" viewBox="0 0 7 4"><path d="M0 4 H7 L3.5 0 Z" fill="#606060"/></svg>
<div class="r" style="left:889px;top:652px;width:15px;height:15px;background:#fff;border:1px solid #b9b9b9;"></div>
<svg class="r" style="left:893px;top:658px;" width="7" height="4" viewBox="0 0 7 4"><path d="M0 0 H7 L3.5 4 Z" fill="#606060"/></svg>
<div class="r" style="left:889px;top:168px;width:15px;height:406px;background:#fff;border:1px solid #ababab;"></div>
<div class="r" style="left:909px;top:150px;width:1px;height:519px;background:#dadada;"></div>
<div class="t" style="left:924.30px;top:158.08px;font-size:22px;line-height:26px;color:#1d78da;letter-spacing:-0.547px;-webkit-text-stroke:0.4px #fff;">Outli...</div>
<svg class="r" style="left:989.8px;top:166px;" width="9" height="5" viewBox="0 0 9 5"><path d="M0.5 0.5 H8.5 L4.5 4.5 Z" fill="#666"/></svg>
<svg class="r" style="left:1006.6px;top:164px;" width="8" height="11" viewBox="0 0 8 11"><path d="M2 0.6 H6 V6.4 H2 Z" fill="none" stroke="#5a5a5a" stroke-width="1"/><rect x="4.6" y="0.6" width="1.6" height="6" fill="#5a5a5a"/><rect x="0.6" y="6" width="6.8" height="1.2" fill="#5a5a5a"/><rect x="3.5" y="7" width="1" height="3.8" fill="#5a5a5a"/></svg>
<div class="r" style="left:925px;top:191px;width:89px;height:472px;background:#fff;border:1px solid #ababab;"></div>
<div class="r" style="left:1028px;top:150px;width:1px;height:519px;background:#dadada;"></div>
<div class="t" style="left:1043.20px;top:158.08px;font-size:22px;line-height:26px;color:#1d78da;letter-spacing:-0.858px;-webkit-text-stroke:0.4px #fff;">Properties</div>
<svg class="r" style="left:1326.5px;top:166px;" width="9" height="5" viewBox="0 0 9 5"><path d="M0.5 0.5 H8.5 L4.5 4.5 Z" fill="#666"/></svg>
<svg class="r" style="left:1343.4px;top:164px;" width="8" height="11" viewBox="0 0 8 11"><path d="M2 0.6 H6 V6.4 H2 Z" fill="none" stroke="#5a5a5a" stroke-width="1"/><rect x="4.6" y="0.6" width="1.6" height="6" fill="#5a5a5a"/><rect x="0.6" y="6" width="6.8" height="1.2" fill="#5a5a5a"/><rect x="3.5" y="7" width="1" height="3.8" fill="#5a5a5a"/></svg>
<div class="t" style="left:1044.60px;top:190.34px;font-size:12px;line-height:16px;color:#222;font-weight:700;letter-spacing:0.002px;">Identification</div>
<div class="r" style="left:1044px;top:205px;width:308px;height:1px;background:#d8d8d8;"></div>
<div class="t" style="left:1044.60px;top:267.54px;font-size:12px;line-height:16px;color:#222;font-weight:700;letter-spacing:-0.268px;">Settings</div>
<div class="r" style="left:1044px;top:282px;width:308px;height:1px;background:#d8d8d8;"></div>
<div class="r" style="left:1044px;top:466px;width:308px;height:1px;background:#d8d8d8;"></div>
<div class="t" style="left:1064.50px;top:213.64px;font-size:12px;line-height:16px;color:#2e2e2e;letter-spacing:-0.379px;">Name</div>
<div class="r" style="left:1194px;top:210px;width:158px;height:22px;background:#fff;border:1px solid #ababab;"></div>
<div class="t" style="left:1200.00px;top:213.14px;font-size:12px;line-height:16px;color:#2e2e2e;letter-spacing:-0.600px;">Vera_Plus</div>
<div class="t" style="left:1064.50px;top:238.64px;font-size:12px;line-height:16px;color:#2e2e2e;letter-spacing:-0.504px;">Type</div>
<div class="r" style="left:1194px;top:235px;width:158px;height:22px;background:#fff;border:1px solid #ababab;"></div>
<div class="t" style="left:1200.00px;top:239.14px;font-size:12px;line-height:16px;color:#2e2e2e;letter-spacing:-0.008px;">VeraController</div>
<div class="t" style="left:1064.50px;top:291.64px;font-size:12px;line-height:16px;color:#2e2e2e;letter-spacing:0.080px;">UserName</div>
<div class="r" style="left:1194px;top:287px;width:158px;height:22px;background:#fff;border:1px solid #ababab;"></div>
<div class="t" style="left:1201.40px;top:289.89px;font-size:11px;line-height:16px;color:#2e2e2e;letter-spacing:-0.240px;">username</div>
<div class="t" style="left:1064.50px;top:316.64px;font-size:12px;line-height:16px;color:#2e2e2e;letter-spacing:-0.586px;">Password</div>
<div class="r" style="left:1194px;top:312px;width:158px;height:22px;background:#fff;border:1px solid #ababab;"></div>
<div class="r" style="left:1202.9px;top:320.8px;width:5.4px;height:5.4px;background:#0a6ed1;border-radius:50%;"></div>
<div class="r" style="left:1210.15px;top:320.8px;width:5.4px;height:5.4px;background:#0a6ed1;border-radius:50%;"></div>
<div class="r" style="left:1217.4px;top:320.8px;width:5.4px;height:5.4px;background:#0a6ed1;border-radius:50%;"></div>
<div class="r" style="left:1224.65px;top:320.8px;width:5.4px;height:5.4px;background:#0a6ed1;border-radius:50%;"></div>
<div class="r" style="left:1231.9px;top:320.8px;width:5.4px;height:5.4px;background:#0a6ed1;border-radius:50%;"></div>
<div class="r" style="left:1239.15px;top:320.8px;width:5.4px;height:5.4px;background:#0a6ed1;border-radius:50%;"></div>
<div class="r" style="left:1246.4px;top:320.8px;width:5.4px;height:5.4px;background:#0a6ed1;border-radius:50%;"></div>
<div class="r" style="left:1253.65px;top:320.8px;width:5.4px;height:5.4px;background:#0a6ed1;border-radius:50%;"></div>
<div class="r" style="left:1260.9px;top:320.8px;width:5.4px;height:5.4px;background:#0a6ed1;border-radius:50%;"></div>
<div class="r" style="left:1268.15px;top:320.8px;width:5.4px;height:5.4px;background:#0a6ed1;border-radius:50%;"></div>
<div class="t" style="left:1064.50px;top:341.64px;font-size:12px;line-height:16px;color:#2e2e2e;letter-spacing:0.328px;">Host</div>
<div class="r" style="left:1194px;top:337px;width:158px;height:22px;background:#fff;border:1px solid #ababab;"></div>
<div class="t" style="left:1200.30px;top:340.44px;font-size:12px;line-height:16px;color:#2e2e2e;letter-spacing:-0.365px;">192.168.0.12</div>
<div class="t" style="left:1064.50px;top:366.64px;font-size:12px;line-height:16px;color:#2e2e2e;letter-spacing:-0.030px;">SerialNumber</div>
<div class="r" style="left:1194px;top:362px;width:158px;height:22px;background:#fff;border:1px solid #ababab;"></div>
<div class="t" style="left:1200.00px;top:365.44px;font-size:12px;line-height:16px;color:#2e2e2e;letter-spacing:-0.299px;">50160532</div>
<div class="t" style="left:1064.50px;top:391.64px;font-size:12px;line-height:16px;color:#2e2e2e;letter-spacing:-0.147px;">Version</div>
<div class="r" style="left:1194px;top:387px;width:158px;height:22px;background:#fff;border:1px solid #ababab;"></div>
<div class="t" style="left:1197.80px;top:390.44px;font-size:12px;line-height:16px;color:#2e2e2e;letter-spacing:-0.362px;">UI7</div>
<svg class="r" style="left:1342px;top:395.5px;" width="6" height="5" viewBox="0 0 6 5"><path d="M0 0.3 H6 L3 4.4 Z" fill="#7a7a7a"/></svg>
<div class="t" style="left:1064.50px;top:416.64px;font-size:12px;line-height:16px;color:#2e2e2e;letter-spacing:-0.318px;">EnableCloudAccess</div>
<div class="r" style="left:1194px;top:416px;width:13px;height:13px;background:#fff;border:1px solid #9a9a9a;"></div>
<svg class="r" style="left:1196px;top:418.5px;" width="9" height="8" viewBox="0 0 9 8"><path d="M0.8 4.2 L3.3 6.8 L8.2 0.8" fill="none" stroke="#7a7a7a" stroke-width="1.7"/></svg>
<div class="t" style="left:1064.50px;top:441.64px;font-size:12px;line-height:16px;color:#2e2e2e;letter-spacing:-0.160px;">DisplayName</div>
<div class="r" style="left:1194px;top:437px;width:158px;height:22px;background:#fff;border:1px solid #ababab;"></div>
<div class="t" style="left:1200.00px;top:440.44px;font-size:12px;line-height:16px;color:#2e2e2e;letter-spacing:-0.497px;">Vera</div>
<svg class="r" style="left:1044px;top:474.5px;" width="16" height="16" viewBox="0 0 16 16"><circle cx="8" cy="8" r="8" fill="#4079ba"/><text x="8" y="13" text-anchor="middle" font-family="Liberation Sans" font-weight="700" font-size="14" fill="#fff">?</text></svg>
<div class="t" style="left:1065.70px;top:474.64px;font-size:12px;line-height:16px;color:#3c78b4;letter-spacing:-0.009px;">Help with VeraController</div>
<div class="t" style="left:10.40px;top:682.04px;font-size:12px;line-height:16px;color:#333;letter-spacing:-0.344px;">Log</div>
<div class="r" style="left:0px;top:703px;width:1366px;height:25px;background:#0072c6;"></div>
<div class="r" style="left:977px;top:703px;width:73px;height:25px;background:#0063b1;"></div>
<svg class="r" style="left:985.5px;top:709px;" width="12" height="12" viewBox="0 0 12 12"><rect x="1" y="1" width="9" height="9" fill="none" stroke="#fff" stroke-width="1.4"/><rect x="7" y="7" width="5" height="5" fill="#fff" stroke="#0063b1" stroke-width="1"/></svg>
<div class="t" style="left:1002.60px;top:707.09px;font-size:11px;line-height:16px;color:#fff;letter-spacing:-0.698px;">DESIGN</div>
<svg class="r" style="left:1059px;top:709.5px;" width="11" height="11" viewBox="0 0 11 11"><rect x="0.6" y="0.6" width="9.8" height="9.8" fill="none" stroke="#fff" stroke-width="1.2"/><path d="M4.6 3.8 L3 5.5 L4.6 7.2 M6.4 3.8 L8 5.5 L6.4 7.2" fill="none" stroke="#fff" stroke-width=".8"/></svg>
<div class="t" style="left:1075.40px;top:707.09px;font-size:11px;line-height:16px;color:#fff;letter-spacing:-0.167px;">XAML</div>
<svg class="r" style="left:1126px;top:708px;" width="14" height="13" viewBox="0 0 14 13"><rect x="0.7" y="0.7" width="12.6" height="11.6" fill="none" stroke="#fff" stroke-width="1.4"/><rect x="1" y="1" width="4.2" height="11" fill="#fff"/></svg>
<svg class="r" style="left:1164px;top:708px;" width="14" height="13" viewBox="0 0 14 13"><rect x="0.7" y="0.7" width="12.6" height="11.6" fill="none" stroke="#fff" stroke-width="1.4"/><rect x="1" y="7.4" width="12" height="4.8" fill="#fff"/></svg>
<div class="r" style="left:1208px;top:715px;width:101px;height:1.5px;background:#fff;"></div>
<div class="r" style="left:1226.5px;top:710px;width:3px;height:11.5px;background:#fff;"></div>
<div class="r" style="left:1258px;top:713px;width:1px;height:5px;background:#fff;"></div>
<div class="t" style="left:1326.90px;top:708.14px;font-size:12px;line-height:16px;color:#fff;letter-spacing:-1.010px;">80%</div>
<div class="r" style="left:0px;top:728px;width:1366px;height:40px;background:#19212b;"></div>
<svg class="r" style="left:16px;top:740px;" width="16" height="16" viewBox="0 0 17 17" preserveAspectRatio="none"><path d="M0 2.4 L7.4 1.3 V8 H0 Z M8.4 1.15 L17 0 V8 H8.4 Z M0 9 H7.4 V15.7 L0 14.6 Z M8.4 9 H17 V17 L8.4 15.85 Z" fill="#fff"/></svg>
<div class="r" style="left:48px;top:728px;width:288px;height:40px;background:#f3f3f3;border-top:1px solid #dcdcdc;"></div>
<svg class="r" style="left:59.5px;top:739.5px;" width="17" height="17" viewBox="0 0 17 17"><circle cx="10.4" cy="6.2" r="5.2" fill="none" stroke="#222" stroke-width="1.25"/><path d="M6.8 10 L0.8 16.2" stroke="#222" stroke-width="1.45"/></svg>
<div class="t" style="left:88.20px;top:740.00px;font-size:15px;line-height:18px;color:#3a3a3a;letter-spacing:-0.278px;">Type here to search</div>
<svg class="r" style="left:260.5px;top:733px;" width="37" height="27" viewBox="0 0 37 27"><path d="M0.6 4.2 L3 3.6 L5.4 24.4 L17.4 22.4 L18.6 23.4 L35.4 20.4 L34 15 L35.8 21.6 L19 25.2 L17.6 25.6 L16.4 25 L3 26.8 Z" fill="#d4591f"/><path d="M2.4 4.6 L14.6 2.8 Q16.4 3.2 17.2 4.6 L18 21.6 L4.8 24 Z" fill="#cfc9bf"/><path d="M17.2 4.6 Q19 3.4 21 3.4 L32 5 L34.4 19.6 L18 21.6 Z" fill="#f3f0ea"/><path d="M4.8 24 L18 21.6 L34.4 19.6 L34.8 20.8 L18.4 23.2 L5 25.4 Z" fill="#a9a49b"/><path d="M5 7 L14 5.8 M5.4 10 L14.2 8.8 M5.8 13 L14.6 11.8 M6.2 16 L15 14.8 M6.6 19 L15.4 17.8" stroke="#9a948a" stroke-width="1.3" stroke-dasharray="1.6 1.1"/><path d="M19.6 6.4 L24 6.8 M19.8 8.8 L24 9.2 M20 11.2 L26 11.7 M20.2 13.6 L29 14.2 M20.4 16 L30 16.4 M20.6 18.4 L28 18.2" stroke="#b9b4aa" stroke-width=".9"/><circle cx="29" cy="7" r="7.3" fill="#f1d01c"/><circle cx="29" cy="7" r="4.6" fill="#f7de3e"/><circle cx="27" cy="5" r="1.6" fill="#f9e76a"/></svg>
<svg class="r" style="left:297px;top:736px;" width="33" height="25" viewBox="0 0 33 25"><defs><linearGradient id="lp" x1="0" y1="0" x2="0.3" y2="1"><stop offset="0" stop-color="#b9cff2"/><stop offset="1" stop-color="#eaf1fc"/></linearGradient></defs><path d="M4.4 0.8 L30 2 Q31 2.2 30.9 3.2 L30.2 19.4 L3.6 19 L3.4 1.8 Q3.4 0.8 4.4 0.8 Z" fill="#3b4258"/><path d="M5 2.4 L29.4 3.5 L28.8 17.6 L5 17.2 Z" fill="url(#lp)"/><path d="M3.6 19 L30.2 19.4 L32.8 23.6 Q20 25 0.4 22.6 Z" fill="#6d7384"/><path d="M8 20.4 L27 20.8 L28 22 L7 21.6 Z" fill="#868c9c"/></svg>
<svg class="r" style="left:351.5px;top:739.5px;" width="18" height="16" viewBox="0 0 18 16"><g fill="none" stroke="#fff" stroke-width="1.15"><path d="M0.7 0.3 V2.7 H11.3 V0.3"/><rect x="0.7" y="4.9" width="10.6" height="6.2"/><path d="M0.7 15.8 V13.3 H11.3 V15.8"/><path d="M14.9 0.3 V15.9" stroke-width="1.4"/></g><rect x="13.3" y="4.6" width="3.3" height="3.5" fill="#fff"/></svg>
<svg class="r" style="left:399.6px;top:737.2px;" width="23" height="21" viewBox="0 0 23 21"><defs><linearGradient id="cp1" x1="0.2" y1="0" x2="0" y2="1"><stop offset="0" stop-color="#1788f2"/><stop offset=".35" stop-color="#2ec2da"/><stop offset=".65" stop-color="#7fd75a"/><stop offset="1" stop-color="#f7cf2a"/></linearGradient><linearGradient id="cp2" x1="0.8" y1="0" x2="0.2" y2="1"><stop offset="0" stop-color="#b266f7"/><stop offset=".5" stop-color="#ef5fa8"/><stop offset=".8" stop-color="#ff8a44"/><stop offset="1" stop-color="#f4502e"/></linearGradient></defs><path d="M12.4 0.7 H14.6 Q16.2 0.7 16.8 2.2 L18.2 6.4 H13.6 Z" fill="#2458d8"/><path d="M5.2 0.7 H12.6 Q14.6 0.7 14 2.8 L11.2 12.8 Q10.6 14.8 8.6 14.8 H2.4 Q0 14.8 0.6 12.4 L3 2.6 Q3.5 0.7 5.2 0.7 Z" fill="url(#cp1)"/><path d="M17.8 20.6 H10.4 Q8.4 20.6 9 18.5 L11.8 8.5 Q12.4 6.5 14.4 6.5 H20.6 Q23 6.5 22.4 8.9 L20 18.7 Q19.5 20.6 17.8 20.6 Z" fill="url(#cp2)"/><path d="M10.4 20.6 Q7.6 20.6 6.8 18 L5.8 14.8 H9.6 Z" fill="#f2552e"/><ellipse cx="11.1" cy="10.6" rx="1.5" ry="3.1" transform="rotate(14 11.1 10.6)" fill="#19212b"/></svg>
<svg class="r" style="left:448px;top:738px;" width="24" height="20" viewBox="0 0 24 20"><path d="M0.5 2 Q0.5 0.8 1.7 0.8 H8.6 L10.8 3 H22.3 Q23.5 3 23.5 4.2 V7 H0.5 Z" fill="#e9a732"/><rect x="0.5" y="4.4" width="23" height="14.4" rx="1" fill="#fbd266"/><rect x="6.8" y="11.4" width="10.4" height="7.6" fill="#3a95dc"/><rect x="9.4" y="14.2" width="5.2" height="4.8" fill="#fbd266"/></svg>
<svg class="r" style="left:497px;top:736.6px;" width="24" height="21" viewBox="0 0 24 21"><path d="M12 0.3 L23.6 10.4 H20.2 V20.6 H3.8 V10.4 H0.4 Z" fill="#fff"/><path d="M9 9.2 A4.6 4.6 0 1 0 15 9.2" fill="none" stroke="#19212b" stroke-width="1.7"/><path d="M12 6.2 V12.6" stroke="#19212b" stroke-width="1.7"/></svg>
<svg class="r" style="left:546px;top:736px;" width="24" height="25" viewBox="0 0 24 25"><path d="M1.4 1 L17.6 2.4 V16.4 L1.4 15 Z" fill="#c9d3e6" stroke="#8a94a8" stroke-width="1"/><path d="M3 2.8 L16 3.9 V15 L3 13.9 Z" fill="#1f3fd0"/><path d="M7 16 L12 16.4 V19.6 L16 21 Q10 24 4 21 L7 19.4 Z" fill="#b9c0cc"/><circle cx="17.5" cy="18.5" r="5.6" fill="#a9b0b6"/><path d="M15 18 L17.4 16 V20 Z M20.2 19 L17.8 17 V21 Z" fill="#1d8a2f"/></svg>
<svg class="r" style="left:596px;top:737px;" width="21" height="23" viewBox="0 0 21 23"><path d="M5 0.8 H16 L18 3 L20.4 3.6 L19.6 7 L20.2 9 L17.4 17.6 Q16.6 19.4 10.5 22.6 Q4.4 19.4 3.6 17.6 L0.8 9 L1.4 7 L0.6 3.6 L3 3 Z" fill="#fb542b"/><path d="M10.5 3.8 L13.6 3.4 L17 6.4 L16.2 9.4 L14 12.2 L15 14.8 L10.5 18.6 L6 14.8 L7 12.2 L4.8 9.4 L4 6.4 L7.4 3.4 Z" fill="#fff"/><path d="M10.5 7.6 L12.2 8.8 L10.5 11.2 L8.8 8.8 Z M7 6.4 L9 7 L8 8 Z M14 6.4 L12 7 L13 8 Z M9.4 13.6 H11.6 L10.5 15.2 Z" fill="#fb542b"/></svg>
<svg class="r" style="left:644px;top:737px;" width="23" height="23" viewBox="0 0 23 23"><circle cx="11.5" cy="11.5" r="11.5" fill="#1ed760"/><path d="M5 8 Q12 5.6 18.4 9 M5.8 11.8 Q12 9.8 17.2 12.6 M6.6 15.4 Q11.6 13.8 16 16" fill="none" stroke="#19212b" stroke-width="2" stroke-linecap="round"/></svg>
<svg class="r" style="left:692.5px;top:738.3px;" width="23" height="18.4" viewBox="0 0 23 18.4"><rect width="23" height="18.4" fill="#050505"/><rect x="0.5" y="0.5" width="22" height="17.4" fill="none" stroke="#8e8e8e" stroke-width="1"/><rect x="0.6" y="0.6" width="21.8" height="1.5" fill="#e6e6e6"/><path d="M3 6.4 L5.4 9.4 M6.4 9.6 H11.6" stroke="#e0e0e0" stroke-width="1.2"/><path d="M2.2 5 H4.4 M7 5 H9" stroke="#bdbdbd" stroke-width="1"/></svg>
<div class="r" style="left:730px;top:728px;width:48px;height:40px;background:#444c55;"></div>
<svg class="r" style="left:742px;top:736.6px;" width="24" height="21" viewBox="0 0 24 21"><path d="M12 0.3 L23.6 10.4 H20.2 V20.6 H3.8 V10.4 H0.4 Z" fill="#fff"/><path d="M9 9.2 A4.6 4.6 0 1 0 15 9.2" fill="none" stroke="#444c55" stroke-width="1.7"/><path d="M12 6.2 V12.6" stroke="#444c55" stroke-width="1.7"/><path d="M14.2 19.4 L20.8 12.2 L23.4 14.4 L16.6 21.6 L13.2 22.6 Z" fill="#f0bd4c"/></svg>
<div class="r" style="left:440px;top:766px;width:40px;height:2px;background:#76b9ed;"></div>
<div class="r" style="left:587px;top:766px;width:39.5px;height:2px;background:#76b9ed;"></div>
<div class="r" style="left:636px;top:766px;width:39.5px;height:2px;background:#76b9ed;"></div>
<div class="r" style="left:685px;top:766px;width:39.5px;height:2px;background:#76b9ed;"></div>
<div class="r" style="left:730px;top:766px;width:48px;height:2px;background:#8ac4f0;"></div>
<svg class="r" style="left:1092px;top:744.5px;" width="14" height="8" viewBox="0 0 14 8"><path d="M0.8 7.2 L7 1 L13.2 7.2" fill="none" stroke="#fff" stroke-width="1.4"/></svg>
<svg class="r" style="left:1114.5px;top:741.5px;" width="17" height="11" viewBox="0 0 17 11"><rect x="5.4" y="1.6" width="10.4" height="7.6" fill="none" stroke="#fff" stroke-width="1.2"/><rect x="16" y="3.6" width="1" height="3.6" fill="#fff"/><rect x="6.6" y="2.8" width="4.4" height="5.2" fill="#fff"/><path d="M0.6 0.8 V2.8 M3.4 0.8 V2.8 M-0.4 3 H4.6 V5.4 Q4.4 7.2 2 7.2 Q-0.2 7.2 -0.4 5.4 Z M2 7.2 V10.5" stroke="#fff" stroke-width="1" fill="#fff"/></svg>
<svg class="r" style="left:1139px;top:740.5px;" width="17" height="14" viewBox="0 0 17 14"><path d="M0.8 4.8 H3.6 L7.4 1.2 V12.8 L3.6 9.2 H0.8 Z" fill="none" stroke="#fff" stroke-width="1.1"/><path d="M9.6 4.6 Q11.2 7 9.6 9.4 M11.6 2.8 Q14.4 7 11.6 11.2 M13.8 1.2 Q17.4 7 13.8 12.8" fill="none" stroke="#fff" stroke-width="1.1"/></svg>
<svg class="r" style="left:1163.5px;top:740px;" width="15" height="15" viewBox="0 0 15 15"><rect x="3.6" y="2.6" width="10.6" height="7.6" fill="none" stroke="#fff" stroke-width="1.2"/><path d="M9 10.4 V13 M5.6 13.6 H12.4" stroke="#fff" stroke-width="1.2"/><rect x="0.4" y="0.4" width="5.2" height="6.4" fill="#fff"/><path d="M1.6 2 H4.4 M1.6 3.6 H4.4" stroke="#19212b" stroke-width=".7"/></svg>
<svg class="r" style="left:1189.5px;top:740.5px;" width="15" height="14" viewBox="0 0 15 14"><path d="M1.2 13 Q1.6 2 13.6 1.2 M5 13 Q5.4 5.6 13.6 5 M8.8 13 Q9.2 9 13.6 8.6" fill="none" stroke="#b8bcc0" stroke-width="1.3"/><circle cx="12.6" cy="12.2" r="1.3" fill="#fff"/></svg>
<div class="t" style="left:1213.00px;top:740.44px;font-size:12px;line-height:16px;color:#fff;letter-spacing:-1.200px;">ENG</div>
<div class="t" style="left:1264.60px;top:730.74px;font-size:12px;line-height:16px;color:#fff;letter-spacing:-0.746px;">12:05</div>
<div class="t" style="left:1249.40px;top:748.84px;font-size:12px;line-height:16px;color:#fff;letter-spacing:-0.276px;">14/10/2025</div>
<svg class="r" style="left:1324px;top:739.5px;" width="26" height="25" viewBox="0 0 26 25"><path d="M1.6 1.6 H16.6 V12.6 H12 V15 L9.4 12.6 H1.6 Z" fill="#fff"/><path d="M3.6 4.2 H14.6 M3.6 6.8 H14.6 M3.6 9.4 H11" stroke="#19212b" stroke-width="1"/><circle cx="16.2" cy="15.6" r="8" fill="#2b2f36" stroke="#4c5058" stroke-width="1.2"/><text x="16.2" y="20.2" text-anchor="middle" font-family="Liberation Sans" font-size="13" font-weight="700" fill="#fff">6</text></svg>
<div class="r" style="left:21px;top:479px;width:153px;height:35px;border:5px solid #ed1c24;"></div>
<div class="r" style="left:1025px;top:139px;width:341px;height:473px;border:5px solid #ed1c24;"></div>
</body></html>
